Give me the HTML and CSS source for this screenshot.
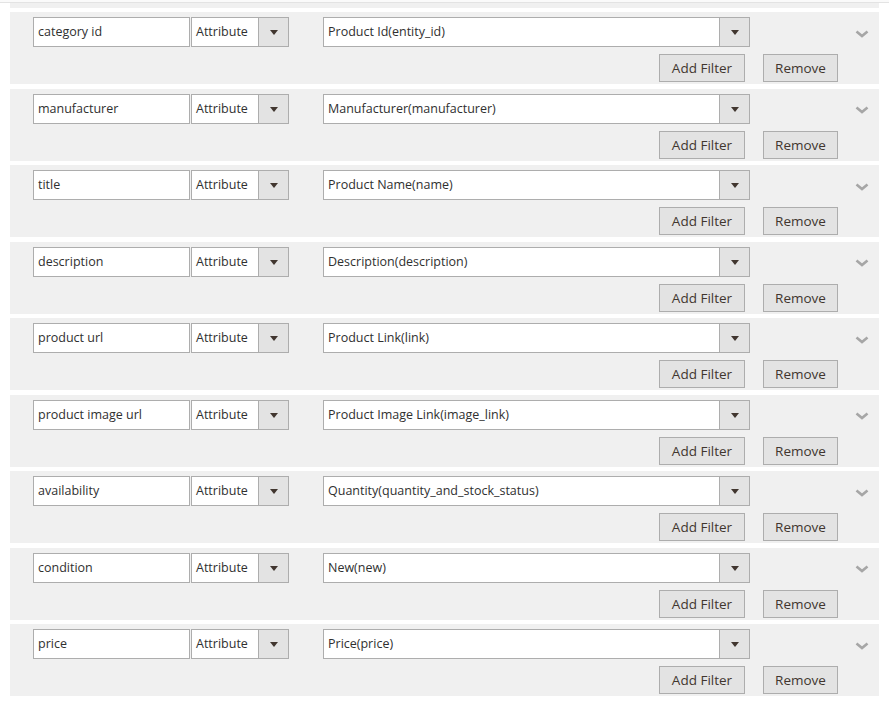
FILE: index.html
```html
<!DOCTYPE html>
<html>
	<head>
		<meta charset="utf-8">
		<title>Feed mapping</title>

		<link rel="stylesheet" href="styles.css">
	</head>
	<body>
		<div class="wrap">
			<div class="row-tail"></div>

			<div class="row">
				<div class="line">
					<div class="field">category id</div>
					<div class="select small"><span>Attribute</span><i class="arrow"></i></div>
					<div class="select big"><span>Product Id(entity_id)</span><i class="arrow"></i></div>
					<svg class="chevron" width="14" height="8" viewBox="0 0 14 8"><path d="M1.5 1.5 L7 6 L12.5 1.5" fill="none" stroke="#a6a6a6" stroke-width="2.6"/></svg>
				</div>
				<div class="actions">
					<button class="btn add">Add Filter</button>
					<button class="btn remove">Remove</button>
				</div>
			</div>

			<div class="row">
				<div class="line">
					<div class="field">manufacturer</div>
					<div class="select small"><span>Attribute</span><i class="arrow"></i></div>
					<div class="select big"><span>Manufacturer(manufacturer)</span><i class="arrow"></i></div>
					<svg class="chevron" width="14" height="8" viewBox="0 0 14 8"><path d="M1.5 1.5 L7 6 L12.5 1.5" fill="none" stroke="#a6a6a6" stroke-width="2.6"/></svg>
				</div>
				<div class="actions">
					<button class="btn add">Add Filter</button>
					<button class="btn remove">Remove</button>
				</div>
			</div>

			<div class="row">
				<div class="line">
					<div class="field">title</div>
					<div class="select small"><span>Attribute</span><i class="arrow"></i></div>
					<div class="select big"><span>Product Name(name)</span><i class="arrow"></i></div>
					<svg class="chevron" width="14" height="8" viewBox="0 0 14 8"><path d="M1.5 1.5 L7 6 L12.5 1.5" fill="none" stroke="#a6a6a6" stroke-width="2.6"/></svg>
				</div>
				<div class="actions">
					<button class="btn add">Add Filter</button>
					<button class="btn remove">Remove</button>
				</div>
			</div>

			<div class="row">
				<div class="line">
					<div class="field">description</div>
					<div class="select small"><span>Attribute</span><i class="arrow"></i></div>
					<div class="select big"><span>Description(description)</span><i class="arrow"></i></div>
					<svg class="chevron" width="14" height="8" viewBox="0 0 14 8"><path d="M1.5 1.5 L7 6 L12.5 1.5" fill="none" stroke="#a6a6a6" stroke-width="2.6"/></svg>
				</div>
				<div class="actions">
					<button class="btn add">Add Filter</button>
					<button class="btn remove">Remove</button>
				</div>
			</div>

			<div class="row">
				<div class="line">
					<div class="field">product url</div>
					<div class="select small"><span>Attribute</span><i class="arrow"></i></div>
					<div class="select big"><span>Product Link(link)</span><i class="arrow"></i></div>
					<svg class="chevron" width="14" height="8" viewBox="0 0 14 8"><path d="M1.5 1.5 L7 6 L12.5 1.5" fill="none" stroke="#a6a6a6" stroke-width="2.6"/></svg>
				</div>
				<div class="actions">
					<button class="btn add">Add Filter</button>
					<button class="btn remove">Remove</button>
				</div>
			</div>

			<div class="row">
				<div class="line">
					<div class="field">product image url</div>
					<div class="select small"><span>Attribute</span><i class="arrow"></i></div>
					<div class="select big"><span>Product Image Link(image_link)</span><i class="arrow"></i></div>
					<svg class="chevron" width="14" height="8" viewBox="0 0 14 8"><path d="M1.5 1.5 L7 6 L12.5 1.5" fill="none" stroke="#a6a6a6" stroke-width="2.6"/></svg>
				</div>
				<div class="actions">
					<button class="btn add">Add Filter</button>
					<button class="btn remove">Remove</button>
				</div>
			</div>

			<div class="row">
				<div class="line">
					<div class="field">availability</div>
					<div class="select small"><span>Attribute</span><i class="arrow"></i></div>
					<div class="select big"><span>Quantity(quantity_and_stock_status)</span><i class="arrow"></i></div>
					<svg class="chevron" width="14" height="8" viewBox="0 0 14 8"><path d="M1.5 1.5 L7 6 L12.5 1.5" fill="none" stroke="#a6a6a6" stroke-width="2.6"/></svg>
				</div>
				<div class="actions">
					<button class="btn add">Add Filter</button>
					<button class="btn remove">Remove</button>
				</div>
			</div>

			<div class="row">
				<div class="line">
					<div class="field">condition</div>
					<div class="select small"><span>Attribute</span><i class="arrow"></i></div>
					<div class="select big"><span>New(new)</span><i class="arrow"></i></div>
					<svg class="chevron" width="14" height="8" viewBox="0 0 14 8"><path d="M1.5 1.5 L7 6 L12.5 1.5" fill="none" stroke="#a6a6a6" stroke-width="2.6"/></svg>
				</div>
				<div class="actions">
					<button class="btn add">Add Filter</button>
					<button class="btn remove">Remove</button>
				</div>
			</div>

			<div class="row">
				<div class="line">
					<div class="field">price</div>
					<div class="select small"><span>Attribute</span><i class="arrow"></i></div>
					<div class="select big"><span>Price(price)</span><i class="arrow"></i></div>
					<svg class="chevron" width="14" height="8" viewBox="0 0 14 8"><path d="M1.5 1.5 L7 6 L12.5 1.5" fill="none" stroke="#a6a6a6" stroke-width="2.6"/></svg>
				</div>
				<div class="actions">
					<button class="btn add">Add Filter</button>
					<button class="btn remove">Remove</button>
				</div>
			</div>
		</div>
	</body>
</html>
```

FILE: styles.css
```css
* {
	margin: 0;
	padding: 0;
	box-sizing: border-box;
}

body {
	background: #ffffff;
	font-family: "Open Sans", "Liberation Sans", sans-serif;
	font-size: 12.5px;
	color: #303030;
}

.wrap {
	border-top: 2px solid #fafafa;
	padding: 0 10px;
}

.wrap::before {
	content: "";
	display: block;
	height: 1px;
	margin: 0 -10px;
	background: #e3e3e3;
}

.row-tail {
	height: 5px;
	background: #f0f0f0;
	margin-bottom: 4px;
}

.row {
	height: 72px;
	margin-bottom: 4.5px;
	background: #f0f0f0;
	padding: 5px 0 0 23px;
}

.line {
	display: flex;
	align-items: center;
	height: 30px;
}

.field {
	width: 157px;
	height: 30px;
	line-height: 27px;
	border: 1px solid #adadad;
	background: #ffffff;
	padding-left: 4px;
	margin-right: 1px;
	white-space: nowrap;
}

.select {
	display: flex;
	height: 30px;
	border: 1px solid #adadad;
	background: #ffffff;
}

.select span {
	flex: 1;
	line-height: 27px;
	padding-left: 4px;
	white-space: nowrap;
	overflow: hidden;
}

.select.small {
	width: 98px;
}

.select.big {
	width: 427px;
	margin-left: 34px;
}

.arrow {
	width: 30px;
	border-left: 1px solid #adadad;
	background: #e3e3e3;
	position: relative;
}

.arrow::after {
	content: "";
	position: absolute;
	left: 11px;
	top: 12px;
	border-left: 4px solid transparent;
	border-right: 4px solid transparent;
	border-top: 5px solid #41362f;
}

.chevron {
	margin-left: auto;
	margin-right: 10px;
	margin-top: 3px;
}

.actions {
	display: flex;
	justify-content: flex-end;
	gap: 18px;
	padding-right: 41px;
	margin-top: 7px;
}

.btn {
	height: 28px;
	border: 1px solid #adadad;
	background: #e3e3e3;
	color: #41362f;
	font-family: "Open Sans", "Liberation Sans", sans-serif;
	font-size: 13.5px;
}

.btn.add {
	width: 86px;
}

.btn.remove {
	width: 75px;
}
```
